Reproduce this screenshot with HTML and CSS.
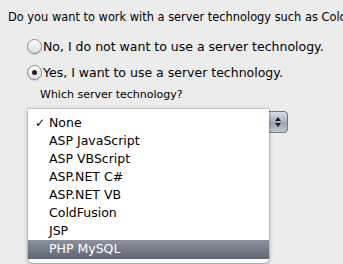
FILE: index.html
```html
<!DOCTYPE html>
<html lang="en">
<head>
  <meta charset="UTF-8">
  <title>Server technology</title>
  <link rel="stylesheet" href="styles.css">
</head>
<body>
  <p class="question">Do you want to work with a server technology such as ColdFusion?</p>
  <div class="options">
    <label class="option"><span class="radio"></span>No, I do not want to use a server technology.</label>
    <label class="option"><span class="radio on"></span>Yes, I want to use a server technology.</label>
    <div class="sub">Which server technology?</div>
    <div class="popup">
      <span class="stepper">
        <svg width="8" height="14" viewBox="0 0 8 14"><path d="M4 2 L7 6 L1 6 Z M4 12 L7 8 L1 8 Z" fill="#1c1c1c"/></svg>
      </span>
      <ul class="menu">
        <li class="checked">None</li>
        <li>ASP JavaScript</li>
        <li>ASP VBScript</li>
        <li>ASP.NET C#</li>
        <li>ASP.NET VB</li>
        <li>ColdFusion</li>
        <li>JSP</li>
        <li class="hover">PHP MySQL</li>
      </ul>
    </div>
  </div>
</body>
</html>
```

FILE: styles.css
```css
* {
  margin: 0;
  padding: 0;
  box-sizing: border-box;
}
html, body {
  height: 100%;
}
body {
  background: #ececec;
  color: #000;
  font-family: "DejaVu Sans", "Lucida Grande", sans-serif;
  white-space: nowrap;
}
.question {
  font-size: 11.4px;
  line-height: 14px;
  padding: 10px 0 0 8px;
  overflow: hidden;
}
.options {
  padding: 9px 0 0 27px;
}
.option {
  display: flex;
  align-items: center;
  height: 26px;
  font-size: 12.5px;
}
.radio {
  width: 15px;
  height: 15px;
  border-radius: 50%;
  border: 1px solid #8c8c8c;
  background: linear-gradient(#fdfdfd, #dcdcdc);
  box-shadow: 0 1px 1px rgba(0,0,0,0.15);
  margin-right: 1px;
  display: inline-flex;
  align-items: center;
  justify-content: center;
}
.radio.on::after {
  content: "";
  width: 5px;
  height: 5px;
  border-radius: 50%;
  background: #222;
}
.sub {
  font-size: 11px;
  line-height: 14px;
  padding: 3px 0 0 13px;
}
.popup {
  position: relative;
  margin: 9px 0 0 9px;
  width: 252px;
  height: 22px;
  background: #fff;
  border: 1px solid #a0a0a0;
  border-radius: 4px;
}
.stepper {
  position: absolute;
  right: -1px;
  top: -1px;
  width: 20px;
  height: 22px;
  border: 1px solid #6e7a8c;
  border-radius: 0 4px 4px 0;
  background: linear-gradient(#d8dde6, #a9b3c2 50%, #97a1b1 51%, #c3cad6);
  display: flex;
  align-items: center;
  justify-content: center;
}
.menu {
  position: absolute;
  left: -9px;
  top: -3px;
  width: 241px;
  list-style: none;
  background: #fff;
  border-radius: 0 0 5px 5px;
  padding: 5px 0 4px;
  box-shadow: 0 1px 4px rgba(0,0,0,0.35), 0 0 0 1px rgba(0,0,0,0.08);
  font-size: 12.5px;
  z-index: 10;
}
.menu li {
  display: block;
  height: 18px;
  line-height: 18px;
  padding-left: 21px;
  position: relative;
}
.menu li.checked::before {
  content: "\2713";
  position: absolute;
  left: 7px;
  font-size: 12px;
}
.menu li.hover {
  background: linear-gradient(#8a929d, #5e6671);
  color: #fff;
  height: 19px;
}
```
